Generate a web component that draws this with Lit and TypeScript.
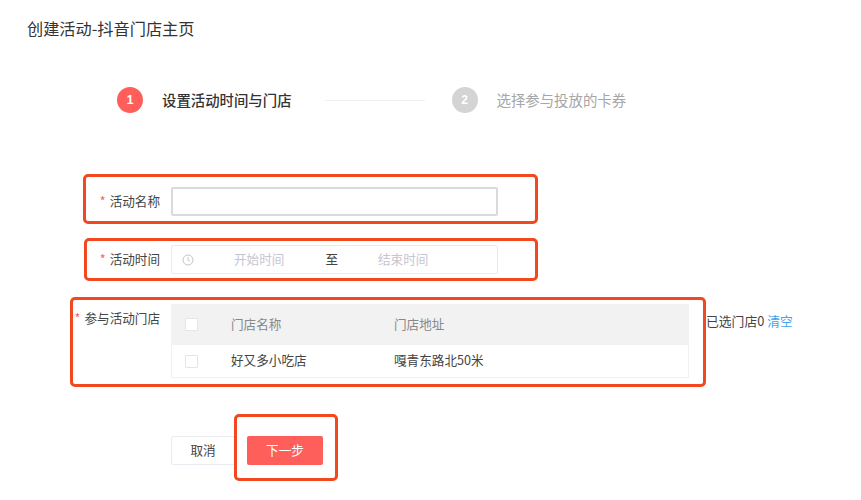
import { LitElement, html, css } from "lit";
import { customElement } from "lit/decorators.js";

@customElement("app-root")
export class AppRoot extends LitElement {
  static styles = css`
    :host {
      display: block;
      position: relative;
      width: 861px;
      height: 500px;
      overflow: hidden;
      background: #fff;
      color: #444;
      font-family: "Noto Sans CJK SC", "Noto Sans", sans-serif;
      font-size: 12.6px;
    }
    * { box-sizing: border-box; }
    .title {
      padding: 16px 0 0 27px;
      height: 87px;
      font-size: 16.2px;
      line-height: 24px;
      color: #333;
    }
    .steps {
      display: flex;
      align-items: center;
      height: 26px;
      padding-left: 117px;
    }
    .dot {
      width: 26px;
      height: 26px;
      border-radius: 50%;
      display: flex;
      align-items: center;
      justify-content: center;
      color: #fff;
      font-size: 12px;
      font-weight: 700;
      font-family: "Liberation Sans", sans-serif;
      background: #ff5f5a;
    }
    .dot.off { background: #d4d4d4; }
    .step-text {
      margin-left: 19px;
      padding-bottom: 2px;
      font-size: 14.4px;
      font-weight: 500;
      color: #333;
      white-space: nowrap;
    }
    .step-text.off { font-weight: 400; color: #a6a6a6; }
    .link { width: 100px; height: 1px; background: #f0f0f0; margin: 0 27px 0 33px; }
    .form { padding-top: 74px; }
    .row {
      display: grid;
      grid-template-columns: 160px 327px;
      column-gap: 11px;
      align-items: center;
      height: 29px;
    }
    .row + .row { margin-top: 29px; }
    .label { text-align: right; white-space: nowrap; color: #444; padding-bottom: 2px; }
    .star { color: #f0635f; margin-right: 4px; }
    .input {
      height: 29px;
      border: 2px solid #d9dbdb;
      border-radius: 2px;
      background: #fff;
    }
    .range {
      display: flex;
      align-items: center;
      height: 29px;
      border: 1px solid #e8ebf2;
      border-radius: 2px;
      color: #c4c6cf;
      padding: 0 0 2px 10px;
      white-space: nowrap;
    }
    .range svg { width: 12px; height: 12px; flex: none; margin-top: 2px; }
    .start { margin-left: 40px; }
    .to { margin-left: 41px; color: #444; }
    .end { margin-left: 40px; }
    .stores {
      display: flex;
      align-items: flex-start;
      margin-top: 30px;
    }
    .stores .label { width: 160px; line-height: 28px; flex: none; }
    .table { margin-left: 11px; width: 518px; flex: none; }
    .tr {
      display: grid;
      grid-template-columns: 60px 163px 1fr;
      align-items: center;
    }
    .head { height: 41px; background: #f2f2f2; color: #888; }
    .body {
      height: 33px;
      border: 1px solid #f0f1f4;
      border-top: none;
      color: #444;
      grid-template-columns: 59px 163px 1fr;
    }
    .text { padding-bottom: 2px; }
    .body .text { padding-bottom: 3px; }
    .cell-check { padding-left: 14px; }
    .body .cell-check { padding-left: 13px; }
    .check {
      display: block;
      width: 13px;
      height: 13px;
      border: 1px solid #e4e5ec;
      border-radius: 1px;
      background: #fff;
    }
    .picked {
      margin-left: 17px;
      line-height: 34px;
      font-size: 12.8px;
      white-space: nowrap;
      color: #444;
    }
    .clear { color: #4a9ff0; }
    .actions {
      display: flex;
      gap: 12px;
      padding: 58px 0 0 171px;
    }
    .btn {
      height: 29px;
      border-radius: 2px;
      font: inherit;
      padding: 0 0 2px;
    }
    .cancel { width: 64px; background: #fff; border: 1px solid #e9ebf0; color: #444; }
    .next { width: 76px; background: #ff5f5a; border: none; color: #fff; }
    .mark {
      position: absolute;
      border: 3px solid #f2481f;
      border-radius: 5px;
      pointer-events: none;
    }
    .m1 { left: 83px; top: 174px; width: 455px; height: 50px; }
    .m2 { left: 84px; top: 238px; width: 454px; height: 43px; }
    .m3 { left: 70px; top: 297px; width: 636px; height: 90px; }
    .m4 { left: 234px; top: 414px; width: 104px; height: 67px; }
  `;

  render() {
    return html`
      <div class="title">创建活动-抖音门店主页</div>
      <div class="steps">
        <div class="dot">1</div>
        <div class="step-text">设置活动时间与门店</div>
        <div class="link"></div>
        <div class="dot off">2</div>
        <div class="step-text off">选择参与投放的卡券</div>
      </div>
      <div class="form">
        <div class="row">
          <div class="label"><span class="star">*</span>活动名称</div>
          <div class="input"></div>
        </div>
        <div class="row">
          <div class="label"><span class="star">*</span>活动时间</div>
          <div class="range">
            <svg viewBox="0 0 12 12" fill="none" stroke="#c4c6cf" stroke-width="1">
              <circle cx="6" cy="6" r="5"></circle>
              <path d="M6 3v3.2l2 1.2"></path>
            </svg>
            <span class="start">开始时间</span>
            <span class="to">至</span>
            <span class="end">结束时间</span>
          </div>
        </div>
        <div class="stores">
          <div class="label"><span class="star">*</span>参与活动门店</div>
          <div class="table">
            <div class="tr head">
              <div class="cell-check"><span class="check"></span></div>
              <div class="text">门店名称</div>
              <div class="text">门店地址</div>
            </div>
            <div class="tr body">
              <div class="cell-check"><span class="check"></span></div>
              <div class="text">好又多小吃店</div>
              <div class="text">嘎青东路北50米</div>
            </div>
          </div>
          <div class="picked">已选门店0 <span class="clear">清空</span></div>
        </div>
      </div>
      <div class="actions">
        <button class="btn cancel">取消</button>
        <button class="btn next">下一步</button>
      </div>
      <div class="mark m1"></div>
      <div class="mark m2"></div>
      <div class="mark m3"></div>
      <div class="mark m4"></div>
    `;
  }
}
